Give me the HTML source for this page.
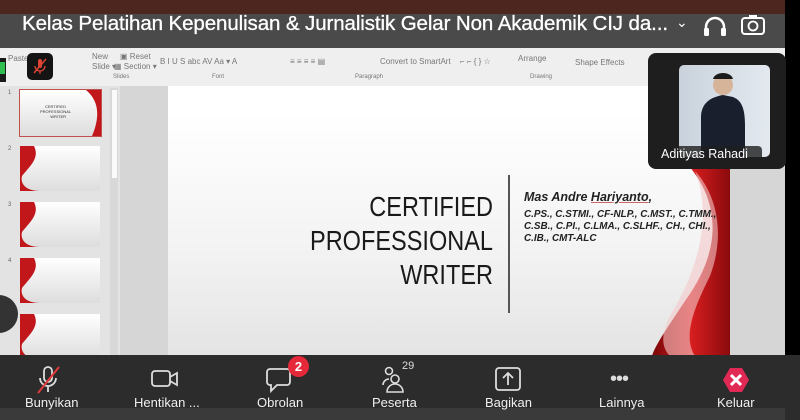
<!DOCTYPE html>
<html><head><meta charset="utf-8"><style>
*{margin:0;padding:0;box-sizing:border-box}
body{width:800px;height:420px;overflow:hidden;background:#000;font-family:"Liberation Sans",sans-serif;position:relative}
.abs{position:absolute}
</style></head><body>
<div class="abs" style="left:0;top:0;width:785px;height:14px;background:#4e2620"></div>
<div class="abs" style="left:0;top:14px;width:785px;height:72px;background:#efefef"></div>
<div class="abs" style="left:0;top:14px;width:785px;height:34px;background:#4a4a4a"></div>
<div class="abs" style="left:22px;top:12px;font-size:20.5px;color:#fff;white-space:nowrap;letter-spacing:-0.1px;-webkit-text-stroke:0.3px #fff">Kelas Pelatihan Kepenulisan &amp; Jurnalistik Gelar Non Akademik CIJ da...</div>
<div class="abs" style="left:676px;top:14px;color:#fff;font-size:14px">⌄</div>
<svg class="abs" style="left:700px;top:14px" width="30" height="24" viewBox="0 0 30 24"><path d="M6 20V13a9 9 0 0 1 18 0v7" fill="none" stroke="#fff" stroke-width="2.5"/><rect x="4" y="14" width="5" height="8" rx="1.5" fill="#fff"/><rect x="21" y="14" width="5" height="8" rx="1.5" fill="#fff"/></svg>
<svg class="abs" style="left:740px;top:14px" width="26" height="22" viewBox="0 0 26 22"><rect x="2" y="4" width="22" height="16" rx="3" fill="none" stroke="#fff" stroke-width="2"/><rect x="9" y="1" width="8" height="4" fill="#fff"/><circle cx="13" cy="12" r="4.5" fill="none" stroke="#fff" stroke-width="1.8"/></svg>
<div class="abs" style="left:0;top:52px;font-size:8px;color:#777;width:640px;height:30px">
<span class="abs" style="left:8px;top:2px">Paste</span>
<span class="abs" style="left:92px;top:0">New</span><span class="abs" style="left:92px;top:10px">Slide ▾</span>
<span class="abs" style="left:120px;top:0">▣ Reset</span><span class="abs" style="left:114px;top:10px">▦ Section ▾</span>
<span class="abs" style="left:113px;top:22px;font-size:6px">Slides</span>
<span class="abs" style="left:160px;top:5px">B I U S abc AV Aa ▾ A</span>
<span class="abs" style="left:212px;top:22px;font-size:6px">Font</span>
<span class="abs" style="left:290px;top:5px">≡ ≡ ≡ ≡ ▤</span>
<span class="abs" style="left:380px;top:5px">Convert to SmartArt</span>
<span class="abs" style="left:355px;top:22px;font-size:6px">Paragraph</span>
<span class="abs" style="left:460px;top:5px">⌐ ⌐ { } ☆</span>
<span class="abs" style="left:518px;top:2px">Arrange</span>
<span class="abs" style="left:575px;top:6px">Shape Effects</span>
<span class="abs" style="left:530px;top:22px;font-size:6px">Drawing</span>
</div>
<div class="abs" style="left:0;top:58px;width:6px;height:24px;background:#1a1a1a"></div>
<div class="abs" style="left:0;top:62px;width:5px;height:12px;background:#2fbf4e"></div>
<div class="abs" style="left:27px;top:53px;width:26px;height:27px;border-radius:5px;background:#141414"></div>
<svg class="abs" style="left:30px;top:56px" width="20" height="20" viewBox="0 0 20 20"><rect x="8" y="3" width="4" height="9" rx="2" fill="#d43"/><path d="M5 10a5 5 0 0 0 10 0M10 15v3" stroke="#d43" fill="none" stroke-width="1.3"/><path d="M4 17L16 3" stroke="#d43" stroke-width="1.5"/></svg>
<div class="abs" style="left:0;top:86px;width:120px;height:270px;background:#e3e3e3"></div>
<div class="abs" style="left:110px;top:88px;width:8px;height:270px;background:#d8d8d8"></div>
<div class="abs" style="left:112px;top:90px;width:5px;height:88px;background:#fafafa"></div>
<div class="abs" style="left:8px;top:90px;font-size:6px;color:#666">1</div>
<div class="abs" style="left:19px;top:89px;width:83px;height:48px;border:1.5px solid #c0504d;background:linear-gradient(#fff,#ddd)"></div>
<div class="abs" style="left:40px;top:104px;font-size:4px;color:#333;text-align:right;width:26px;line-height:5px">CERTIFIED PROFESSIONAL WRITER</div>
<svg class="abs" style="left:82px;top:90px" width="19" height="46"><path d="M4 0C16 10 19 25 10 46H19V0Z" fill="#c1171a"/></svg>
<div class="abs" style="left:8px;top:146px;font-size:6px;color:#666">2</div>
<div class="abs" style="left:20px;top:146px;width:80px;height:45px;background:linear-gradient(#fff,#ddd)"></div>
<svg class="abs" style="left:20px;top:146px" width="24" height="45"><path d="M14 0C20 12 10 20 2 30C0 38 6 45 20 45H0V0Z" fill="#c1171a"/></svg>
<div class="abs" style="left:8px;top:202px;font-size:6px;color:#666">3</div>
<div class="abs" style="left:20px;top:202px;width:80px;height:45px;background:linear-gradient(#fff,#ddd)"></div>
<svg class="abs" style="left:20px;top:202px" width="24" height="45"><path d="M14 0C20 12 10 20 2 30C0 38 6 45 20 45H0V0Z" fill="#c1171a"/></svg>
<div class="abs" style="left:8px;top:258px;font-size:6px;color:#666">4</div>
<div class="abs" style="left:20px;top:258px;width:80px;height:45px;background:linear-gradient(#fff,#ddd)"></div>
<svg class="abs" style="left:20px;top:258px" width="24" height="45"><path d="M14 0C20 12 10 20 2 30C0 38 6 45 20 45H0V0Z" fill="#c1171a"/></svg>
<div class="abs" style="left:20px;top:314px;width:80px;height:45px;background:linear-gradient(#fff,#ddd)"></div>
<svg class="abs" style="left:20px;top:314px" width="24" height="45"><path d="M14 0C20 12 10 20 2 30C0 38 6 45 20 45H0V0Z" fill="#c1171a"/></svg>
<div class="abs" style="left:-20px;top:295px;width:38px;height:38px;border-radius:50%;background:#333"></div>
<div class="abs" style="left:120px;top:86px;width:665px;height:270px;background:#d6d6d6"></div>
<div class="abs" style="left:168px;top:86px;width:562px;height:270px;background:linear-gradient(#fff 10%,#f3f3f3 60%,#e4e4e4)"></div>
<svg class="abs" style="left:600px;top:86px" width="130" height="270" viewBox="0 0 130 270"><defs><linearGradient id="g" x1="0" x2="1"><stop offset="0" stop-color="#7a0608"/><stop offset=".5" stop-color="#d81e20"/><stop offset="1" stop-color="#8a0a0c"/></linearGradient></defs>
<path d="M80 70C120 110 125 160 85 215C65 245 55 260 52 270H130V80C115 70 100 68 80 70Z" fill="url(#g)"/>
<path d="M95 85C112 130 100 180 70 230C60 250 62 262 70 270H95C82 250 95 220 110 190C125 150 118 110 95 85Z" fill="#f3c8c8" opacity=".6"/></svg>
<div class="abs" style="left:240px;top:190px;width:253px;text-align:right;font-size:28px;line-height:34px;color:#1a1a1a;transform:scaleX(.84);transform-origin:right">CERTIFIED<br>PROFESSIONAL<br>WRITER</div>
<div class="abs" style="left:508px;top:175px;width:1.5px;height:138px;background:#555"></div>
<div class="abs" style="left:524px;top:190px;font-size:12.5px;font-weight:bold;font-style:italic;color:#222">Mas Andre <u style="text-decoration-color:#c66">Hariyanto</u>,</div>
<div class="abs" style="left:524px;top:209px;font-size:10.3px;font-weight:bold;font-style:italic;color:#222;line-height:12px;white-space:nowrap;transform:scaleX(.96);transform-origin:left">C.PS., C.STMI., CF-NLP., C.MST., C.TMM.,<br>C.SB., C.PI., C.LMA., C.SLHF., CH., CHI.,<br>C.IB., CMT-ALC</div>
<div class="abs" style="left:648px;top:53px;width:138px;height:116px;border-radius:8px;background:#1e1e1e"></div>
<div class="abs" style="left:679px;top:65px;width:91px;height:92px;border-radius:5px;background:linear-gradient(90deg,#c9d2dc,#e3e9ef)"></div>
<svg class="abs" style="left:679px;top:65px" width="91" height="92"><circle cx="44" cy="20" r="10" fill="#d6b49a"/><path d="M34 14c2-8 18-8 20 0z" fill="#1b1b1b"/><path d="M22 92V52c0-14 10-20 22-22l10 2c10 4 12 14 12 30v30z" fill="#1a1f2e"/></svg>
<div class="abs" style="left:656px;top:146px;width:106px;height:20px;background:rgba(30,30,30,.8);border-radius:4px"></div>
<div class="abs" style="left:661px;top:147px;font-size:12.5px;color:#fff">Aditiyas Rahadi</div>
<div class="abs" style="left:0;top:355px;width:800px;height:65px;background:#2c2c2c"></div>
<div class="abs" style="left:0;top:408px;width:785px;height:12px;background:#3a3a3a"></div>
<svg class="abs" style="left:35px;top:365px" width="26" height="30" viewBox="0 0 26 30"><rect x="9" y="2" width="8" height="15" rx="4" fill="none" stroke="#ddd" stroke-width="1.8"/><path d="M5 13a8 8 0 0 0 16 0M13 21v6" stroke="#ddd" fill="none" stroke-width="1.8"/><path d="M3 28L24 2" stroke="#e23b3b" stroke-width="2"/></svg>
<svg class="abs" style="left:151px;top:369px" width="28" height="20"><rect x="1" y="2" width="18" height="15" rx="3" fill="none" stroke="#ddd" stroke-width="1.8"/><path d="M19 8l7-4v12l-7-4" fill="none" stroke="#ddd" stroke-width="1.8"/></svg>
<svg class="abs" style="left:266px;top:367px" width="26" height="26"><path d="M4 2h17a3 3 0 0 1 3 3v10a3 3 0 0 1-3 3H11l-6 6v-6H4a3 3 0 0 1-3-3V5a3 3 0 0 1 3-3z" fill="none" stroke="#ddd" stroke-width="1.8"/></svg>
<div class="abs" style="left:288px;top:356px;width:21px;height:21px;border-radius:50%;background:#e5283a;color:#fff;font-size:13px;font-weight:bold;text-align:center;line-height:21px">2</div>
<svg class="abs" style="left:381px;top:365px" width="26" height="28"><circle cx="8" cy="6" r="3.5" fill="none" stroke="#ddd" stroke-width="1.6"/><circle cx="14" cy="14" r="4" fill="none" stroke="#ddd" stroke-width="1.6"/><path d="M6 27a8 8 0 0 1 16 0z" fill="none" stroke="#ddd" stroke-width="1.6"/><path d="M2 20a6 6 0 0 1 6-6" fill="none" stroke="#ddd" stroke-width="1.6"/></svg>
<div class="abs" style="left:402px;top:360px;font-size:11px;color:#ddd">29</div>
<svg class="abs" style="left:495px;top:367px" width="26" height="24"><rect x="1" y="1" width="24" height="22" rx="3" fill="none" stroke="#ddd" stroke-width="1.8"/><path d="M13 18V6M8 11l5-5 5 5" fill="none" stroke="#ddd" stroke-width="1.8"/></svg>
<div class="abs" style="left:610px;top:368px;font-size:20px;color:#ddd;letter-spacing:-1px">•••</div>
<svg class="abs" style="left:722px;top:366px" width="28" height="28"><path d="M8 2h12l7 12-7 12H8L1 14z" fill="#e02a55" /><path d="M9 9l10 10M19 9L9 19" stroke="#fff" stroke-width="3"/></svg>
<div class="abs" style="top:395px;left:0;width:800px;font-size:13px;color:#f0f0f0;white-space:nowrap">
<span class="abs" style="left:25px">Bunyikan</span>
<span class="abs" style="left:134px">Hentikan ...</span>
<span class="abs" style="left:257px">Obrolan</span>
<span class="abs" style="left:372px">Peserta</span>
<span class="abs" style="left:485px">Bagikan</span>
<span class="abs" style="left:599px">Lainnya</span>
<span class="abs" style="left:717px">Keluar</span>
</div>
</body></html>
